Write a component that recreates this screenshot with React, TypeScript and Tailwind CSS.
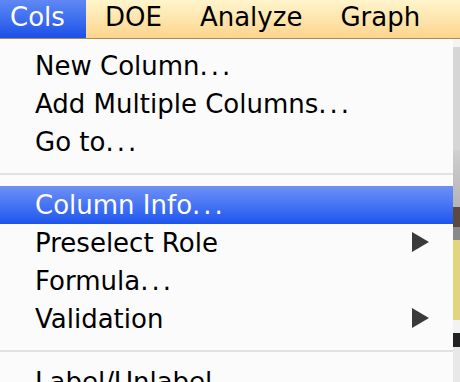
import React from "react";

const Arrow = () => (
  <svg width="17" height="20" viewBox="0 0 17 20" className="absolute right-[24px] top-[8px]">
    <polygon points="0,0 17,10 0,20" fill="#3a3a3a" />
  </svg>
);

type Item = { label: string; dots?: boolean; sub?: boolean; active?: boolean };

const Row = ({ label, dots, sub, active }: Item) => (
  <div
    className={
      "relative h-[38px] pl-[35px] leading-[38px] whitespace-nowrap " +
      (active
        ? "bg-gradient-to-b from-[#6e90f6] to-[#1c54ee] text-white"
        : "text-black")
    }
  >
    {label}
    {dots && <span className="tracking-[3px]">...</span>}
    {sub && <Arrow />}
  </div>
);

const Sep = () => (
  <div className="h-[25px] flex items-center">
    <div className="h-[2px] w-full bg-[#e2e2e2]" />
  </div>
);

export default function App() {
  return (
    <div className="w-[460px] h-[382px] overflow-hidden bg-[#f2f2f2] font-['DejaVu_Sans',sans-serif] text-[26px] flex flex-col">
      <div className="h-[39px] shrink-0 flex border-b border-[#b08a52] bg-gradient-to-b from-[#fff5cc] to-[#fdd48c]">
        <div className="h-full w-[86px] pl-[10px] leading-[34px] text-white bg-gradient-to-b from-[#6088f4] to-[#1b4fe9]">
          Cols
        </div>
        <div className="h-full px-[19px] leading-[34px] text-black">DOE</div>
        <div className="h-full px-[19px] leading-[34px] text-black">Analyze</div>
        <div className="h-full px-[19px] leading-[34px] text-black">Graph</div>
      </div>
      <div className="flex flex-1 min-h-0">
        <div className="w-[453px] bg-[#fbfbfb] pt-[8px] overflow-hidden">
          <Row label="New Column" dots />
          <Row label="Add Multiple Columns" dots />
          <Row label="Go to" dots />
          <Sep />
          <Row label="Column Info" dots active />
          <Row label="Preselect Role" sub />
          <Row label="Formula" dots />
          <Row label="Validation" sub />
          <Sep />
          <Row label="Label/Unlabel" />
        </div>
        <div className="flex-1 flex flex-col">
          <div className="h-[8px] bg-[#f4f4f4]" />
          <div className="h-[103px] bg-[#d6d6d6]" />
          <div className="h-[57px] bg-gradient-to-b from-[#d0d0d0] to-[#b4b4b4]" />
          <div className="h-[20px] bg-[#5a4a40]" />
          <div className="h-[13px] bg-[#8a8a8a]" />
          <div className="h-[80px] bg-[#e2d67c]" />
          <div className="h-[13px] bg-[#f2f2f2]" />
          <div className="h-[14px] bg-[#222222]" />
          <div className="flex-1 bg-[#e8e8e8]" />
        </div>
      </div>
    </div>
  );
}
